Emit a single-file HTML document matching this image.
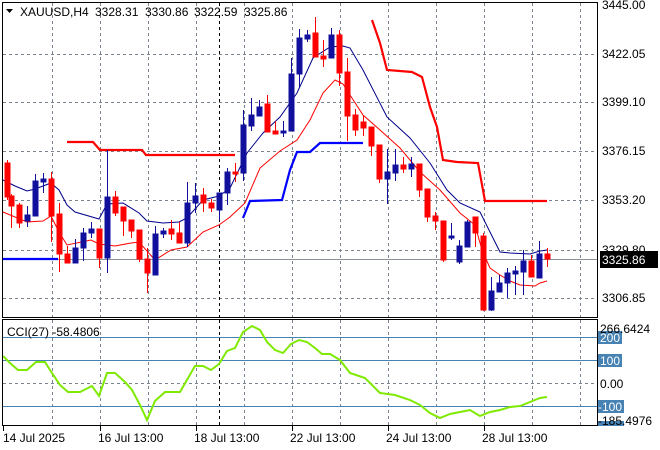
<!DOCTYPE html>
<html><head><meta charset="utf-8"><style>
html,body{margin:0;padding:0;background:#fff;}
svg{display:block;font-family:"Liberation Sans",sans-serif;}
</style></head><body>
<svg width="660" height="450" viewBox="0 0 660 450" xmlns="http://www.w3.org/2000/svg">
<rect width="660" height="450" fill="#fff"/>
<g stroke="#7a8590" stroke-dasharray="3,3" stroke-width="1">
<line x1="3" y1="54.5" x2="597" y2="54.5"/><line x1="3" y1="102.5" x2="597" y2="102.5"/><line x1="3" y1="151.5" x2="597" y2="151.5"/><line x1="3" y1="200.5" x2="597" y2="200.5"/><line x1="3" y1="250.5" x2="597" y2="250.5"/><line x1="3" y1="298.5" x2="597" y2="298.5"/>
<line x1="52.5" y1="3" x2="52.5" y2="317"/><line x1="100.5" y1="3" x2="100.5" y2="317"/><line x1="148.5" y1="3" x2="148.5" y2="317"/><line x1="196.5" y1="3" x2="196.5" y2="317"/><line x1="244.5" y1="3" x2="244.5" y2="317"/><line x1="292.5" y1="3" x2="292.5" y2="317"/><line x1="340.5" y1="3" x2="340.5" y2="317"/><line x1="388.5" y1="3" x2="388.5" y2="317"/><line x1="436.5" y1="3" x2="436.5" y2="317"/><line x1="484.5" y1="3" x2="484.5" y2="317"/><line x1="532.5" y1="3" x2="532.5" y2="317"/><line x1="580.5" y1="3" x2="580.5" y2="317"/>
<line x1="52.5" y1="320" x2="52.5" y2="425"/><line x1="100.5" y1="320" x2="100.5" y2="425"/><line x1="148.5" y1="320" x2="148.5" y2="425"/><line x1="196.5" y1="320" x2="196.5" y2="425"/><line x1="244.5" y1="320" x2="244.5" y2="425"/><line x1="292.5" y1="320" x2="292.5" y2="425"/><line x1="340.5" y1="320" x2="340.5" y2="425"/><line x1="388.5" y1="320" x2="388.5" y2="425"/><line x1="436.5" y1="320" x2="436.5" y2="425"/><line x1="484.5" y1="320" x2="484.5" y2="425"/><line x1="532.5" y1="320" x2="532.5" y2="425"/><line x1="580.5" y1="320" x2="580.5" y2="425"/>
<line x1="3" y1="383.5" x2="597" y2="383.5"/>
</g>
<g stroke="#000" stroke-dasharray="3,3"><line x1="219.5" y1="3" x2="219.5" y2="317"/><line x1="219.5" y1="320" x2="219.5" y2="425"/></g>
<g stroke="#4682b4" stroke-width="1"><line x1="3" y1="337.5" x2="597" y2="337.5"/><line x1="3" y1="360.5" x2="597" y2="360.5"/><line x1="3" y1="406.5" x2="597" y2="406.5"/></g>
<line x1="3" y1="259.5" x2="597" y2="259.5" stroke="#8a9099"/>
<polyline fill="none" stroke="#f00" stroke-width="2.2" points="67,142 93,142 100,150 142,150 146,155 235,155"/>
<polyline fill="none" stroke="#f00" stroke-width="2.2" points="372,20 380,43 387,70 412,72 422,77 430,107 437,127 443,160 457,162 478,163 485,201 547,201"/>
<polyline fill="none" stroke="#0000ff" stroke-width="2.2" points="3,259 58,259"/>
<polyline fill="none" stroke="#0000ff" stroke-width="2.2" points="243,218 250,201 282,200 290,170 297,152 310,152 320,143 363,143"/>
<polyline fill="none" stroke="#00008b" stroke-width="1" points="3,180 15,186 27,191 35,189 51,183 59,190 67,205 75,212 99,219 107,204 123,203 139,213 147,221 163,223 179,222 187,218 203,200 219,196 230,188 247,153 263,133 280,117 297,93 313,58 330,47 343,46 350,48 363,70 387,117 410,138 430,163 447,190 460,203 480,212 500,252 510,253 530,254 540,251 547,250"/>
<polyline fill="none" stroke="#f00" stroke-width="1" points="3,212 27,222 43,221 51,216 59,232 67,245 91,240 99,244 115,246 131,243 139,242 155,260 171,250 187,247 203,232 219,225 230,217 245,203 260,168 280,151 297,140 310,120 323,93 335,80 343,84 350,95 363,115 380,130 400,148 420,172 440,190 460,213 475,225 482,250 490,268 500,275 510,281 520,285 535,286 540,283 547,281"/>
<g stroke-width="1">
<g fill="#f00" stroke="#f00">
<line x1="7.5" y1="160" x2="7.5" y2="200"/><rect x="5" y="163" width="5" height="34"/>
<line x1="11.5" y1="194" x2="11.5" y2="228"/><rect x="9" y="196" width="5" height="10"/>
<line x1="19.5" y1="203" x2="19.5" y2="228"/><rect x="17" y="205" width="5" height="18"/>
<line x1="51.5" y1="172" x2="51.5" y2="242"/><rect x="49" y="179" width="5" height="37"/>
<line x1="59.5" y1="203" x2="59.5" y2="272"/><rect x="57" y="214" width="5" height="40"/>
<line x1="67.5" y1="246" x2="67.5" y2="263"/><rect x="65" y="254" width="5" height="9"/>
<line x1="99.5" y1="229" x2="99.5" y2="268"/><rect x="97" y="229" width="5" height="29"/>
<line x1="115.5" y1="191" x2="115.5" y2="216"/><rect x="113" y="197" width="5" height="16"/>
<line x1="123.5" y1="207" x2="123.5" y2="236"/><rect x="121" y="207" width="5" height="14"/>
<line x1="131.5" y1="220" x2="131.5" y2="238"/><rect x="129" y="220" width="5" height="11"/>
<line x1="139.5" y1="230" x2="139.5" y2="262"/><rect x="137" y="230" width="5" height="29"/>
<line x1="147.5" y1="248" x2="147.5" y2="293"/><rect x="145" y="259" width="5" height="14"/>
<line x1="171.5" y1="220" x2="171.5" y2="240"/><rect x="169" y="229" width="5" height="5"/>
<line x1="179.5" y1="222" x2="179.5" y2="243"/><rect x="177" y="233" width="5" height="10"/>
<line x1="203.5" y1="188" x2="203.5" y2="212"/><rect x="201" y="195" width="5" height="8"/>
<line x1="211.5" y1="199" x2="211.5" y2="212"/><rect x="209" y="203" width="5" height="5"/>
<line x1="235.5" y1="163" x2="235.5" y2="182"/><rect x="233" y="172" width="5" height="2"/>
<line x1="267.5" y1="95" x2="267.5" y2="132"/><rect x="265" y="104" width="5" height="28"/>
<line x1="275.5" y1="121" x2="275.5" y2="133"/><rect x="273" y="131" width="5" height="3"/>
<line x1="315.5" y1="17" x2="315.5" y2="57"/><rect x="313" y="33" width="5" height="24"/>
<line x1="323.5" y1="40" x2="323.5" y2="67"/><rect x="321" y="56" width="5" height="3"/>
<line x1="339.5" y1="30" x2="339.5" y2="86"/><rect x="337" y="35" width="5" height="38"/>
<line x1="347.5" y1="58" x2="347.5" y2="141"/><rect x="345" y="72" width="5" height="44"/>
<line x1="355.5" y1="109" x2="355.5" y2="136"/><rect x="353" y="115" width="5" height="15"/>
<line x1="363.5" y1="115" x2="363.5" y2="136"/><rect x="361" y="122" width="5" height="6"/>
<line x1="371.5" y1="127" x2="371.5" y2="156"/><rect x="369" y="127" width="5" height="19"/>
<line x1="379.5" y1="145" x2="379.5" y2="183"/><rect x="377" y="145" width="5" height="34"/>
<line x1="403.5" y1="157" x2="403.5" y2="173"/><rect x="401" y="165" width="5" height="4"/>
<line x1="419.5" y1="164" x2="419.5" y2="197"/><rect x="417" y="164" width="5" height="26"/>
<line x1="427.5" y1="189" x2="427.5" y2="222"/><rect x="425" y="189" width="5" height="28"/>
<line x1="435.5" y1="212" x2="435.5" y2="230"/><rect x="433" y="216" width="5" height="5"/>
<line x1="443.5" y1="221" x2="443.5" y2="262"/><rect x="441" y="221" width="5" height="39"/>
<line x1="475.5" y1="217" x2="475.5" y2="247"/><rect x="473" y="217" width="5" height="16"/>
<line x1="483.5" y1="233" x2="483.5" y2="311"/><rect x="481" y="236" width="5" height="74"/>
<line x1="531.5" y1="255" x2="531.5" y2="277"/><rect x="529" y="261" width="5" height="16"/>
<line x1="547.5" y1="248" x2="547.5" y2="267"/><rect x="545" y="254" width="5" height="5"/>
</g>
<g fill="#10109c" stroke="#10109c">
<line x1="27.5" y1="206" x2="27.5" y2="227"/><rect x="25" y="215" width="5" height="6"/>
<line x1="35.5" y1="174" x2="35.5" y2="216"/><rect x="33" y="181" width="5" height="35"/>
<line x1="43.5" y1="173" x2="43.5" y2="193"/><rect x="41" y="179" width="5" height="3"/>
<line x1="75.5" y1="239" x2="75.5" y2="263"/><rect x="73" y="248" width="5" height="15"/>
<line x1="83.5" y1="228" x2="83.5" y2="261"/><rect x="81" y="233" width="5" height="15"/>
<line x1="91.5" y1="222" x2="91.5" y2="238"/><rect x="89" y="229" width="5" height="4"/>
<line x1="107.5" y1="150" x2="107.5" y2="273"/><rect x="105" y="197" width="5" height="61"/>
<line x1="155.5" y1="226" x2="155.5" y2="275"/><rect x="153" y="234" width="5" height="41"/>
<line x1="163.5" y1="228" x2="163.5" y2="238"/><rect x="161" y="231" width="5" height="3"/>
<line x1="187.5" y1="182" x2="187.5" y2="247"/><rect x="185" y="203" width="5" height="40"/>
<line x1="195.5" y1="183" x2="195.5" y2="213"/><rect x="193" y="196" width="5" height="7"/>
<line x1="219.5" y1="193" x2="219.5" y2="220"/><rect x="217" y="193" width="5" height="17"/>
<line x1="227.5" y1="168" x2="227.5" y2="205"/><rect x="225" y="172" width="5" height="21"/>
<line x1="243.5" y1="110" x2="243.5" y2="181"/><rect x="241" y="125" width="5" height="48"/>
<line x1="251.5" y1="98" x2="251.5" y2="131"/><rect x="249" y="115" width="5" height="11"/>
<line x1="259.5" y1="100" x2="259.5" y2="116"/><rect x="257" y="107" width="5" height="9"/>
<line x1="283.5" y1="121" x2="283.5" y2="137"/><rect x="281" y="131" width="5" height="2"/>
<line x1="291.5" y1="58" x2="291.5" y2="131"/><rect x="289" y="74" width="5" height="57"/>
<line x1="299.5" y1="29" x2="299.5" y2="87"/><rect x="297" y="38" width="5" height="36"/>
<line x1="307.5" y1="30" x2="307.5" y2="42"/><rect x="305" y="35" width="5" height="4"/>
<line x1="331.5" y1="28" x2="331.5" y2="58"/><rect x="329" y="35" width="5" height="23"/>
<line x1="387.5" y1="149" x2="387.5" y2="204"/><rect x="385" y="172" width="5" height="7"/>
<line x1="395.5" y1="149" x2="395.5" y2="181"/><rect x="393" y="165" width="5" height="8"/>
<line x1="411.5" y1="157" x2="411.5" y2="177"/><rect x="409" y="164" width="5" height="5"/>
<line x1="451.5" y1="223" x2="451.5" y2="240"/><rect x="449" y="236" width="5" height="2"/>
<line x1="459.5" y1="240" x2="459.5" y2="264"/><rect x="457" y="246" width="5" height="16"/>
<line x1="467.5" y1="220" x2="467.5" y2="247"/><rect x="465" y="222" width="5" height="25"/>
<line x1="491.5" y1="277" x2="491.5" y2="311"/><rect x="489" y="291" width="5" height="19"/>
<line x1="499.5" y1="275" x2="499.5" y2="292"/><rect x="497" y="283" width="5" height="9"/>
<line x1="507.5" y1="268" x2="507.5" y2="298"/><rect x="505" y="273" width="5" height="10"/>
<line x1="515.5" y1="266" x2="515.5" y2="295"/><rect x="513" y="271" width="5" height="3"/>
<line x1="523.5" y1="250" x2="523.5" y2="295"/><rect x="521" y="261" width="5" height="11"/>
<line x1="539.5" y1="241" x2="539.5" y2="278"/><rect x="537" y="254" width="5" height="24"/>
</g>
</g>
<polyline fill="none" stroke="#7fea00" stroke-width="2" points="3,356 10,363 18,370 27,370 36,362 45,362 50,370 60,385 68,392 80,392 92,386 99,396 107,373 115,373 125,382 132,390 140,405 147,420 155,401 165,392 180,392 195,366 203,366 211,370 219,364 227,351 235,348 243,332 252,326 260,330 267,342 275,350 283,353 291,344 299,340 307,342 315,348 322,354 330,354 340,360 350,373 365,378 380,393 395,395 410,400 420,405 430,413 440,418 450,414 460,412 470,410 480,416 490,412 500,410 510,407 520,406 530,402 540,398 547,397"/>
<rect x="2.5" y="2.5" width="595" height="315" fill="none" stroke="#000"/>
<rect x="2.5" y="319.5" width="595" height="106" fill="none" stroke="#000"/>
<path d="M6,9 L13,9 L9.5,13 Z" fill="#000"/>
<g font-size="12" fill="#000">
<text x="20" y="16">XAUUSD,H4</text>
<text x="95" y="16">3328.31</text>
<text x="145" y="16">3330.86</text>
<text x="194" y="16">3322.59</text>
<text x="244" y="16">3325.86</text>
</g>
<text x="7" y="336" font-size="12" fill="#000">CCI(27) -58.4806</text>
<g font-size="12" fill="#000">
<text x="602" y="9">3445.00</text>
<text x="602" y="58">3422.05</text>
<text x="602" y="106">3399.10</text>
<text x="602" y="155">3376.15</text>
<text x="602" y="204">3353.20</text>
<text x="602" y="254">3329.80</text>
<text x="602" y="302">3306.85</text>
</g>
<rect x="600" y="251" width="58" height="17" fill="#000"/>
<text x="602" y="264" font-size="12" fill="#fff">3325.86</text>
<g font-size="12">
<rect x="598" y="331" width="24" height="13" fill="#4682b4"/>
<rect x="598" y="354" width="24" height="13" fill="#4682b4"/>
<rect x="598" y="400" width="26" height="13" fill="#4682b4"/>
<rect x="598" y="421" width="26" height="5" fill="#4682b4"/>
<text x="600" y="333" fill="#000">266.6424</text>
<text x="600" y="342" fill="#fff">200</text>
<text x="600" y="365" fill="#fff">100</text>
<text x="600" y="388" fill="#000">0.00</text>
<text x="598" y="411" fill="#fff">-100</text>
<text x="598" y="425" fill="#000">-185.4976</text>
</g>
<g stroke="#000"><line x1="3.5" y1="426" x2="3.5" y2="431"/><line x1="100.5" y1="426" x2="100.5" y2="431"/><line x1="196.5" y1="426" x2="196.5" y2="431"/><line x1="292.5" y1="426" x2="292.5" y2="431"/><line x1="388.5" y1="426" x2="388.5" y2="431"/><line x1="484.5" y1="426" x2="484.5" y2="431"/></g>
<g font-size="12" fill="#000">
<text x="3" y="442">14 Jul 2025</text>
<text x="98" y="442">16 Jul 13:00</text>
<text x="194" y="442">18 Jul 13:00</text>
<text x="290" y="442">22 Jul 13:00</text>
<text x="386" y="442">24 Jul 13:00</text>
<text x="482" y="442">28 Jul 13:00</text>
</g>
</svg>
</body></html>
